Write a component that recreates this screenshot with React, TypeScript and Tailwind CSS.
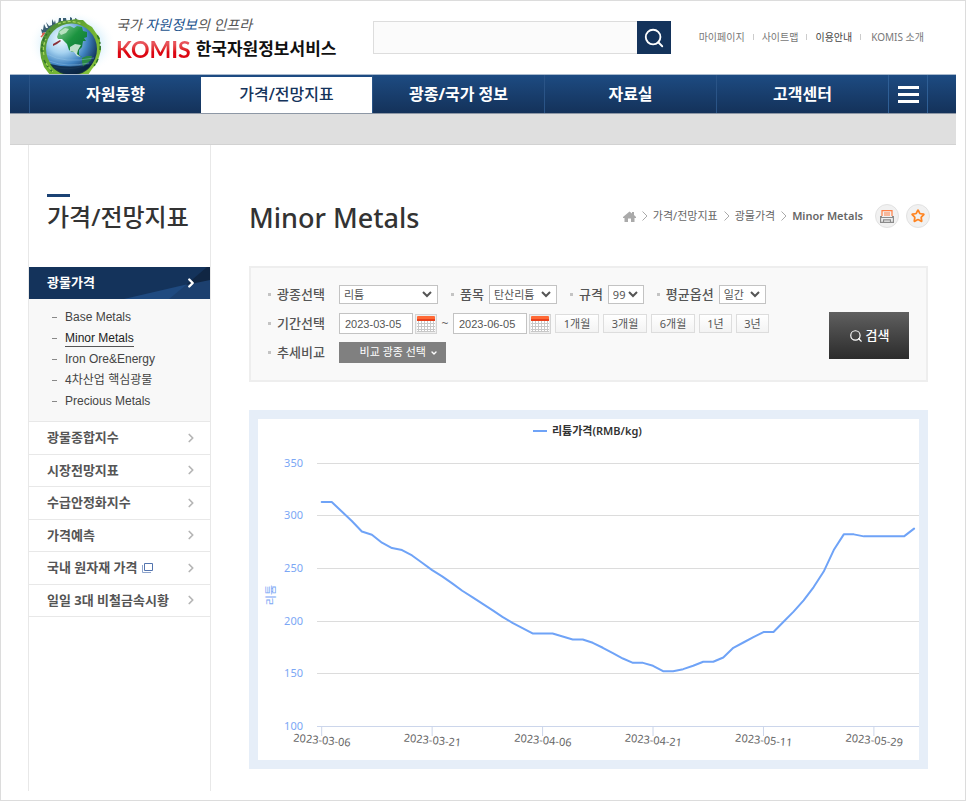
import { ChevronDown, ChevronRight, Search, Star } from "lucide-react";

const NAV = ["자원동향", "가격/전망지표", "광종/국가 정보", "자료실", "고객센터"];

const SUB_MENU = [
	"Base Metals",
	"Minor Metals",
	"Iron Ore&Energy",
	"4차산업 핵심광물",
	"Precious Metals",
];

const SIDE_MENU = [
	{ label: "광물종합지수" },
	{ label: "시장전망지표" },
	{ label: "수급안정화지수" },
	{ label: "가격예측" },
	{ label: "국내 원자재 가격", popup: true },
	{ label: "일일 3대 비철금속시황" },
];

const PRICES = [
	313, 313, 304, 295, 285, 282, 274.4, 269.3, 267.4, 262.3, 255.4, 248.4, 242.4,
	235.8, 228.8, 222.8, 216.5, 210.4, 204, 198.4, 193.4, 188.3, 188.3, 188.3,
	185.4, 182.6, 182.6, 179.4, 174.7, 169.6, 164.5, 160.4, 160.4, 157.6, 152.5,
	152.5, 154.4, 157.6, 161.4, 161.4, 165.5, 174.7, 179.7, 184.8, 189.6, 189.6,
	199.4, 209, 219.6, 232.3, 247, 267.4, 282.3, 282.3, 280.4, 280.4, 280.4,
	280.4, 280.4, 287.7,
];

const DATES = [
	"2023-03-06",
	"2023-03-21",
	"2023-04-06",
	"2023-04-21",
	"2023-05-11",
	"2023-05-29",
];

const Globe = () => (
	<svg viewBox="0 0 88 64" className="h-16 w-[88px] shrink-0" aria-hidden="true">
		<defs>
			<radialGradient id="sky">
				<stop offset="0.5" stopColor="#bfe6f8" />
				<stop offset="1" stopColor="#ffffff" stopOpacity="0" />
			</radialGradient>
			<radialGradient id="sea" cx="0.3" cy="0.3" r="0.8">
				<stop offset="0" stopColor="#f4fbff" />
				<stop offset="0.35" stopColor="#a5d2f0" />
				<stop offset="0.65" stopColor="#3f82c0" />
				<stop offset="1" stopColor="#0c2748" />
			</radialGradient>
			<linearGradient id="land" x1="0" y1="0" x2="1" y2="1">
				<stop offset="0" stopColor="#8fd09a" />
				<stop offset="0.45" stopColor="#1c9440" />
				<stop offset="1" stopColor="#0a6a30" />
			</linearGradient>
			<linearGradient id="grass" x1="0" y1="0" x2="1" y2="1">
				<stop offset="0" stopColor="#3c7b3c" />
				<stop offset="0.5" stopColor="#6fb130" />
				<stop offset="1" stopColor="#8cc63f" />
			</linearGradient>
		</defs>
		<ellipse cx="42" cy="34" rx="44" ry="33" fill="url(#sky)" />
		{/* 도시 */}
		<path
			d="M12 23l-1-4 2 1 1-6 2 4 2 0-2-6 3 4 3-1 0-6 2 4 1-3 1 5 2-1 1-6 2 0 0 5 2-1 0-4 3 0 1 5 3-1 0-5 2 1 0 5 3 0 0-5 2 1 0 5 2 2-16 3z"
			fill="#3a5d72"
		/>
		<path d="M12 24l3-1M11 27l3-3" stroke="#d9604e" strokeWidth="1.5" />
		<path
			d="M41 10l5-1 3 1 4 0 4 4 5 3 4 6 4 5 0 6 1 6-2 7-2 6-5 6-4 6H20l-6-8-1-3-2-6-1-8 1-8 2-5 4-7 6-5 8-4z"
			fill="url(#grass)"
		/>
		<path
			d="M12 42q-1-14 8-21M14 50q3 7 9 12M70 40q1-8-3-15M68 49q-2 5-6 9"
			stroke="#2f742a"
			strokeWidth="1.500"
			fill="none"
			strokeDasharray="4 2 2 3"
		/>
		<path
			d="M14 45q-2-8 2-16M16 53q3 5 7 9M28 14q12-5 24 0"
			stroke="#a8d75e"
			strokeWidth="1.200"
			fill="none"
			strokeDasharray="3 2"
		/>
		<circle cx="41.5" cy="39" r="25.5" fill="url(#sea)" />
		<path
			d="M27 27l2-6 5-4 6-1 4 2 3-2 5 1 1 4 4 1 0 5-3 1 2 3-3 0-1 6-3 3 0 5 3 2-4-1-3-4-3 0-3-2-2-6-5-5-4 0z"
			fill="url(#land)"
		/>
		<path d="M40 37l5-3 6 1-3 5-1 4 4 3-4-1-3-4-4-1z" fill="#eaf6ee" opacity="0.8" />
		<path d="M29 22l6-4 4 1-3 4-5 2z" fill="#cdeed3" opacity="0.8" />
		<path d="M52 48l5-2 5 0-1 4-5 4-3 3-1-5z" fill="#2b8a45" />
		<path d="M23 34l7-4 1 1-4 3-4 2z" fill="#8a3038" />
		<path
			d="M17 44q17 10 47 4M19 51q18 7 40 2M24 57q14 4 30-1"
			fill="none"
			stroke="#9ac8e8"
			strokeWidth="0.6"
			opacity="0.7"
		/>
		<path d="M20 54q20 5 42 0-6 11-21 11-14 0-21-11z" fill="#08203c" opacity="0.8" />
	</svg>
);

const CalendarIcon = () => (
	<svg viewBox="0 0 22 20" className="h-5 w-[22px]" aria-hidden="true">
		<rect x="0.5" y="0.5" width="21" height="19" fill="#efefef" stroke="#d4d4d4" />
		<path d="M2 7V3q0-1 1-1h16q1 0 1 1v4z" fill="#ff6a36" />
		<path d="M2 5h18v2H2z" fill="#e8401c" />
		<path d="M2 7h18v11H2z" fill="#fff" />
		<path
			d="M2 9.5h18M2 12.5h18M2 15.5h18M2 17.5h18M3.5 7v11M6.5 7v11M9.5 7v11M12.5 7v11M15.5 7v11M18.5 7v11"
			stroke="#c8c8c8"
			fill="none"
		/>
	</svg>
);

const Bullet = () => <span className="mr-[6px] size-[3px] shrink-0 bg-[#c4c4c4]" />;

const Crumb = () => (
	<svg viewBox="0 0 6 10" className="ml-[6px] mr-[5px] h-[10px] w-[6px]" aria-hidden="true">
		<path d="M0.5 0.5L5 5L0.5 9.5" fill="none" stroke="#aaa" />
	</svg>
);

type FieldProps = {
	id: string;
	label: string;
	value: string;
	labelClass?: string;
	selectClass: string;
};

const SelectField = ({ id, label, value, labelClass, selectClass }: FieldProps) => (
	<div className="flex items-center">
		<label
			htmlFor={id}
			className={`flex items-center text-[13px] font-medium text-[#555] ${labelClass ?? "mr-[5px]"}`}
		>
			<Bullet />
			{label}
		</label>
		<div className="relative flex">
			<select
				id={id}
				className={`h-[19px] appearance-none border border-[#c3c3c3] bg-white pl-1 text-[11px] leading-4 text-[#555] ${selectClass}`}
			>
				<option>{value}</option>
			</select>
			<svg
				viewBox="0 0 10 7"
				className="pointer-events-none absolute right-[6px] top-[6px] h-[7px] w-[10px]"
				aria-hidden="true"
			>
				<path d="M1 1l4 4 4-4" fill="none" stroke="#555" strokeWidth="2" />
			</svg>
		</div>
	</div>
);

const Header = () => (
	<header className="flex h-[73px] items-start pl-[20px] pr-8">
		<a href="#" className="flex w-[343px] shrink-0 pt-[9px]">
			<Globe />
			<span className="-ml-[2px] flex flex-col pt-[5px]">
				<span className="text-[14px] italic leading-[20px] text-[#555]">
					국가 <span className="text-[#24558f]">자원정보</span>의 인프라
				</span>
				<span className="flex items-center gap-[5px] whitespace-nowrap leading-[28px]">
					<span className="bg-gradient-to-b from-[#e8535a] from-30% to-[#dc0512] to-60% bg-clip-text font-['Lato',sans-serif] text-[23px] font-bold text-transparent">
						KOMIS
					</span>
					<span className="text-[17px] font-bold text-[#111]">한국자원정보서비스</span>
				</span>
			</span>
		</a>
		<form className="mt-5 flex h-[33px] min-w-0 max-w-[298px] flex-1">
			<input
				type="text"
				aria-label="통합검색"
				className="min-w-0 flex-1 border border-r-0 border-[#ddd] bg-[#fbfbfb] px-2 text-sm"
			/>
			<button
				type="button"
				aria-label="검색"
				className="flex w-[34px] items-center justify-center bg-[#14335b] text-white"
			>
				<Search className="size-[22px]" strokeWidth={2} />
			</button>
		</form>
		<ul className="ml-auto mt-[26px] flex items-center whitespace-nowrap text-[10px] leading-5 text-[#777]">
			<li>
				<a href="#">마이페이지</a>
			</li>
			<li className="mx-[8px] h-[6px] w-px bg-[#ccc]" />
			<li>
				<a href="#">사이트맵</a>
			</li>
			<li className="mx-[8px] h-[6px] w-px bg-[#ccc]" />
			<li className="text-[#444]">
				<a href="#">이용안내</a>
			</li>
			<li className="ml-[8px] mr-[10px] h-[6px] w-px bg-[#ccc]" />
			<li>
				<a href="#">KOMIS 소개</a>
			</li>
		</ul>
	</header>
);

const Nav = () => (
	<nav className="flex h-10 border-b border-t border-b-[#8d97a5] border-t-[#a9bace] bg-gradient-to-b from-[#1d4b82] to-[#14325a] pl-[19px] pr-7">
		{NAV.map((name) => (
			<a
				key={name}
				href="#"
				className={
					name === "가격/전망지표"
						? "flex flex-1 items-center justify-center border-t-2 border-[#1d4b82] bg-white pb-[3px] text-base font-medium text-[#14335b]"
						: "flex flex-1 items-center justify-center border-l border-[#2a5487] pb-px text-base font-bold text-white"
				}
			>
				{name}
			</a>
		))}
		<button
			type="button"
			aria-label="전체메뉴"
			className="flex w-10 flex-col items-center justify-center gap-[4px] border-x border-[#2f5f96]"
		>
			<span className="h-[3px] w-[21px] bg-white" />
			<span className="h-[3px] w-[21px] bg-white" />
			<span className="h-[3px] w-[21px] bg-white" />
		</button>
	</nav>
);

const Sidebar = () => (
	<aside className="w-[183px] shrink-0 border-x border-[#e8e8e8]">
		<div className="h-[122px] px-[18px] pt-[49px]">
			<div className="h-[3px] w-[23px] bg-[#1b4274]" />
			<h2 className="pt-[2px] text-2xl font-medium leading-[36px] text-[#333]">
				가격/전망지표
			</h2>
		</div>

		<a
			href="#"
			className="relative flex h-8 items-center justify-between bg-[#14335b] pl-[18px] pr-3 text-[13px] font-bold text-white"
		>
			<svg
				viewBox="0 0 181 32"
				preserveAspectRatio="none"
				className="absolute inset-0 size-full"
				aria-hidden="true"
			>
				<path d="M95 32L181 12V32z" fill="#1f4a80" />
				<path d="M140 32L157 18L181 12V32z" fill="#1c406f" />
				<path d="M157 18L178 0H181V13z" fill="#102643" />
			</svg>
			<span className="relative">광물가격</span>
			<ChevronRight className="relative size-[14px]" strokeWidth={4} />
		</a>
		<ul className="border-b border-[#e8e8e8] bg-[#f8f8f8] pb-[9px] pl-[23px] pt-2 font-['Liberation_Sans','Noto_Sans_CJK_KR',sans-serif] text-xs text-[#444]">
			{SUB_MENU.map((name) => (
				<li key={name} className="flex h-[21px] items-center">
					<span className="mr-[8px] h-px w-[5px] bg-[#888]" />
					<a
						href="#"
						className={
							name === "Minor Metals"
								? "border-b border-[#555] leading-[15px] text-[#222]"
								: "leading-[15px]"
						}
					>
						{name}
					</a>
				</li>
			))}
		</ul>
		<ul className="grid h-[195px] auto-rows-fr">
			{SIDE_MENU.map((m) => (
				<li key={m.label} className="border-b border-[#e8e8e8]">
					<a
						href="#"
						className="flex h-full items-center justify-between pl-[18px] pr-3 text-[13px] font-bold text-[#555]"
					>
						<span className="flex items-center gap-[5px] whitespace-nowrap">
							{m.label}
							{m.popup && (
								<svg viewBox="0 0 11 11" className="size-[11px]" aria-label="새창">
									<path d="M2.5 1.5h8v7h-8z" fill="#fff" stroke="#5374ae" />
									<path d="M0.5 3v7.500H9" fill="none" stroke="#8fa5cd" />
								</svg>
							)}
						</span>
						<ChevronRight className="size-[14px] text-[#b5b5b5]" strokeWidth={3} />
					</a>
				</li>
			))}
		</ul>
	</aside>
);

const Heading = () => (
	<div className="flex h-[121px] items-start justify-between pt-[53px]">
		<h1 className="text-[27px] font-medium leading-[40px] text-[#333]">Minor Metals</h1>
		<div className="-mr-[2px] mt-[6px] flex items-center whitespace-nowrap text-[11px] text-[#666]">
			<svg viewBox="0 0 13 11" className="h-[11px] w-[13px]" aria-label="홈">
				<path d="M6.500 0.500L9 2.500V1h2v3L13 6v1h-1.500v4H8V7.500H5V11H1.500V7H0V6z" fill="#aaa" />
			</svg>
			<Crumb />
			<a href="#">가격/전망지표</a>
			<Crumb />
			<a href="#">광물가격</a>
			<Crumb />
			<strong className="font-semibold">Minor Metals</strong>
			<button
				type="button"
				aria-label="인쇄"
				className="ml-3 flex size-6 items-center justify-center rounded-full border border-[#e2e2e2] bg-[#f1f1f1]"
			>
				<svg viewBox="0 0 14 13" className="h-[13px] w-[14px]" fill="none" aria-hidden="true">
					<path d="M2 6V0.6h10V6" stroke="#ff7f45" strokeWidth="1.2" />
					<path d="M4 3h6M4 5h6" stroke="#ff7f45" />
					<path
						d="M2 6.600H0.600v5.800h12.800V6.600H12M0.600 7.500h12.800M3.500 12V9.800h7V12"
						stroke="#8b8b8b"
						strokeWidth="1.2"
					/>
				</svg>
			</button>
			<button
				type="button"
				aria-label="즐겨찾기"
				className="ml-[7px] flex size-6 items-center justify-center rounded-full border border-[#e2e2e2] bg-[#f1f1f1]"
			>
				<Star
					className="size-[14px] text-[#ff8421]"
					strokeWidth={3}
					strokeLinejoin="miter"
				/>
			</button>
		</div>
	</div>
);

const SearchPanel = () => (
	<form className="flex items-end justify-between border-2 border-[#eee] bg-[#f9f9f9] pb-[17px] pl-[17px] pr-[17px] pt-4">
		<div className="flex flex-col gap-2">
			<div className="flex h-[21px] items-center gap-[13px]">
				<SelectField
					id="mineral"
					label="광종선택"
					value="리튬"
					labelClass="w-[71px]"
					selectClass="w-[99px]"
				/>
				<SelectField id="item" label="품목" value="탄산리튬" selectClass="w-[68px]" />
				<SelectField id="spec" label="규격" value="99" selectClass="w-[36px]" />
				<SelectField id="avg" label="평균옵션" value="일간" selectClass="w-[47px]" />
			</div>
			<div className="flex h-[21px] items-center">
				<label
					htmlFor="from"
					className="flex w-[71px] items-center text-[13px] font-medium text-[#555]"
				>
					<Bullet />
					기간선택
				</label>
				<input
					id="from"
					type="text"
					defaultValue="2023-03-05"
					className="h-[21px] w-[74px] border border-[#c3c3c3] bg-white pl-[5px] font-['Liberation_Sans',sans-serif] text-[11px] text-[#555]"
				/>
				<button type="button" aria-label="시작일 선택" className="ml-[2px]">
					<CalendarIcon />
				</button>
				<span className="w-4 text-center text-xs text-[#666]">~</span>
				<input
					type="text"
					aria-label="종료일"
					defaultValue="2023-06-05"
					className="h-[21px] w-[74px] border border-[#c3c3c3] bg-white pl-[5px] font-['Liberation_Sans',sans-serif] text-[11px] text-[#555]"
				/>
				<button type="button" aria-label="종료일 선택" className="ml-[2px]">
					<CalendarIcon />
				</button>
				<div className="ml-1 flex gap-1">
					{["1개월", "3개월", "6개월", "1년", "3년"].map((p) => (
						<button
							key={p}
							type="button"
							className={`h-[19px] border border-[#ddd] bg-gradient-to-b from-white to-[#f3f3f3] text-[11px] leading-4 text-[#555] ${p.length > 2 ? "w-11" : "w-[33px]"}`}
						>
							{p}
						</button>
					))}
				</div>
			</div>
			<div className="flex h-[21px] items-center">
				<span className="flex w-[71px] items-center text-[13px] font-medium text-[#555]">
					<Bullet />
					추세비교
				</span>
				<button
					type="button"
					className="flex h-[21px] w-[107px] items-center justify-end gap-1 bg-[#808080] pr-2 text-[11px] text-white"
				>
					비교 광종 선택
					<ChevronDown className="size-2" strokeWidth={4} />
				</button>
			</div>
		</div>
		<button
			type="button"
			className="mb-[4px] flex h-[47px] w-20 shrink-0 items-center justify-center gap-[3px] bg-gradient-to-b from-[#606060] to-[#2c2c2c] text-[13px] font-medium text-white"
		>
			<Search className="size-[14px]" strokeWidth={2} />
			검색
		</button>
	</form>
);

const toX = (i: number) => 63.7 + i * 10.04;
const toY = (v: number) => 307.5 - (v - 100) * 1.054;

const PriceChart = () => (
	<section className="mt-7 border-[9px] border-[#e6eef8] bg-white">
		<svg
			viewBox="0 0 661 341"
			className="block h-auto w-full"
			fontFamily='"Noto Sans", "Noto Sans CJK KR", sans-serif'
			role="img"
			aria-label="리튬가격"
		>
			<path d="M275 12h14" stroke="#6fa3f7" strokeWidth="2" />
			<text x="294" y="16" fontSize="11" fontWeight="600" fill="#333">
				리튬가격(RMB/kg)
			</text>
			{[350, 300, 250, 200, 150, 100].map((v) => (
				<g key={v}>
					<path
						d={`M59 ${Math.floor(toY(v)) + 0.5}H661`}
						stroke={v === 100 ? "#ccd6eb" : "#dcdcdc"}
					/>
					<text x="45" y={Math.floor(toY(v)) + 4} fontSize="11" textAnchor="end" fill="#7ba7f5">
						{v}
					</text>
				</g>
			))}
			<text
				transform="translate(17 176) rotate(-90)"
				fontSize="11"
				textAnchor="middle"
				fill="#7ba7f5"
			>
				리튬
			</text>
			{DATES.map((d, i) => (
				<g key={d}>
					<path d={`M${toX(i * 11)} 308v9`} stroke="#ccd6eb" />
					<text
						transform={`translate(${toX(i * 11)} 325) rotate(5)`}
						fontSize="11"
						textAnchor="middle"
						fill="#666"
					>
						{d}
					</text>
				</g>
			))}
			<polyline
				points={PRICES.map((v, i) => `${toX(i)},${toY(v)}`).join(" ")}
				fill="none"
				stroke="#6fa3f7"
				strokeWidth="2"
				strokeLinejoin="round"
				strokeLinecap="round"
			/>
		</svg>
	</section>
);

const App = () => {
	return (
		<div className="flex min-h-screen flex-col border border-[#dcdcdc] bg-white px-[9px] pb-[9px] font-['Noto_Sans','Noto_Sans_CJK_KR',sans-serif]">
			<Header />
			<Nav />
			<div className="h-[31px] border-b border-[#d2d2d2] bg-[#dfdfdf]" />
			<div className="flex flex-1 pl-[18px] pr-7">
				<Sidebar />
				<main className="min-w-0 flex-1 pl-[38px]">
					<Heading />
					<SearchPanel />
					<PriceChart />
				</main>
			</div>
		</div>
	);
};

export default App;
